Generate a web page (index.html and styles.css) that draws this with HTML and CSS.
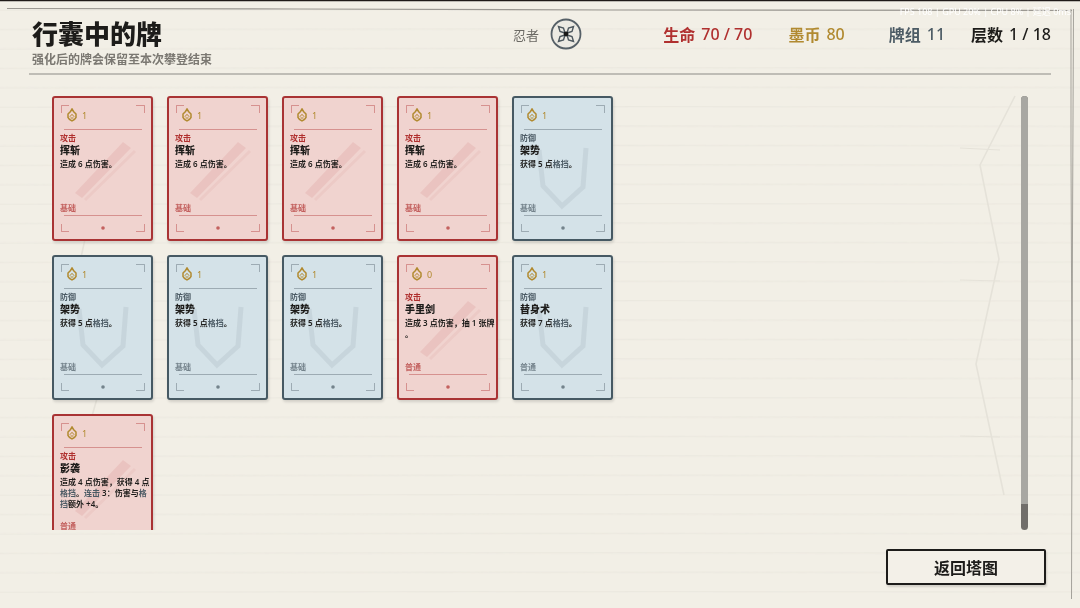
FILE: index.html
```
<!DOCTYPE html>
<html lang="zh-CN">
<head>
  <meta charset="UTF-8" />
  <meta name="viewport" content="width=device-width, initial-scale=1.0" />
  <title>行囊中的牌</title>
  <link rel="stylesheet" href="styles.css">
</head>
<body>
  <svg class="paper" viewBox="0 0 1080 608" preserveAspectRatio="none" aria-hidden="true">
    <defs>
      <pattern id="rules" x="0" y="9" width="1080" height="19.4" patternUnits="userSpaceOnUse">
        <path d="M0 1.2L540 .6L1080 1" fill="none" stroke="#ebe8df" stroke-width="1" />
      </pattern>
    </defs>
    <rect width="1080" height="608" fill="url(#rules)" />
    <g fill="none" stroke="#e5e2d9" stroke-width="1.6">
      <path d="M1015 96L980 165L999 259L976 364L1004 495" />
      <path d="M98 180L80 262M98 395L88 430" />
      <path d="M960 148L1000 150M960 280L1000 281M960 436L1000 437" stroke-width="1" />
    </g>
    <path d="M0 .5H1080" stroke="#1f1a18" stroke-width="1.4" />
    <g fill="none" stroke="#9b9892">
      <path d="M7 8.5L300 9L610 10L1072 10.5" stroke-width="1.2" />
      <path d="M1071 9V155L1072 380M1073.5 9L1072.5 230L1071.5 599" stroke-width=".9" />
    </g>
  </svg>

  <div class="perf">FPS 108 | GPU 20% | CPU 8% | 延迟 0ms</div>

  <header>
    <div class="heading">
      <h1>行囊中的牌</h1>
      <p>强化后的牌会保留至本次攀登结束</p>
    </div>
    <div class="hero">
      <span>忍者</span>
      <svg viewBox="0 0 32 32" width="32" height="32" aria-hidden="true">
        <circle cx="16" cy="16" r="14.5" fill="#eceae3" stroke="#566067" stroke-width="1.8" />
        <g fill="none" stroke="#4c575e" stroke-width="1.4">
          <path d="M15 15L10 13.500L8.500 8.500L13.500 10Z" />
          <path d="M17 15L22 13.500L23.500 8.500L18.500 10Z" />
          <path d="M17 17L22 18.500L23.500 23.500L18.500 22Z" />
          <path d="M15 17L10 18.500L8.500 23.500L13.500 22Z" />
        </g>
        <circle cx="16" cy="16" r="2.4" fill="#191919" />
      </svg>
    </div>
    <div class="stats">
      <div class="stat hp"><b>生命</b><span>70 / 70</span></div>
      <div class="stat gold"><b>墨币</b><span>80</span></div>
      <div class="stat deck"><b>牌组</b><span>11</span></div>
      <div class="stat floor"><b>层数</b><span>1 / 18</span></div>
    </div>
  </header>

  <main>
    <div class="cards" id="cards"></div>
    <div class="scrollbar"><div class="thumb"></div></div>
  </main>

  <footer>
    <button type="button">返回塔图</button>
  </footer>

  <script>
    const block = '<em>格挡</em>';
    const slash = { type: 'attack', cost: 1, name: '挥斩', text: '造成 6 点伤害。', rarity: '基础' };
    const guard = { type: 'defend', cost: 1, name: '架势', text: `获得 5 点${block}。`, rarity: '基础' };
    const deck = [
      slash, slash, slash, slash, guard,
      guard, guard, guard,
      { type: 'attack', cost: 0, name: '手里剑', text: '造成 3 点伤害，抽 1 张牌。', rarity: '普通' },
      { type: 'defend', cost: 1, name: '替身术', text: `获得 7 点${block}。`, rarity: '普通' },
      { type: 'attack', cost: 1, name: '影袭', text: `造成 4 点伤害，获得 4 点${block}。<em>连击</em> 3：伤害与${block}额外 +4。`, rarity: '普通' }
    ];
    const labels = { attack: '攻击', defend: '防御' };

    const art = {
      attack: '<path d="M23 97L71 46L79 52L30 102Z" fill="currentColor"/><path d="M33 104L83 55" stroke="currentColor" stroke-width="3" opacity=".6"/>',
      defend: '<path d="M27 54L31 90L50 110L71 91L74 52" fill="none" stroke="currentColor" stroke-width="5"/>'
    };

    function cardHtml(card) {
      return `<article class="card ${card.type}">
        <svg class="art" viewBox="0 0 101 145" aria-hidden="true">
          <g class="mark">${art[card.type]}</g>
          <path class="frame" d="M9.5 17V9.5H17M84 9.5H92.5V17M9.5 128V135.500H17M84 135.500H92.500V128M12 33.500H90M12 119.500H90" />
          <circle class="dot" cx="51" cy="132" r="1.8" />
        </svg>
        <div class="cost">
          <svg viewBox="0 0 12 14" width="12" height="14" aria-hidden="true">
            <path d="M6 1L7.500 3.500L10 6V9.500L8.500 11.500L6 13L3.500 11.500L2 9.500V6L4.500 3.500Z" />
            <path d="M3.800 8.800L6 6.300L8.200 8.800M4.500 10H7.500" stroke-width="1" />
          </svg>
          <span>${card.cost}</span>
        </div>
        <div class="type">${labels[card.type]}</div>
        <h2>${card.name}</h2>
        <p>${card.text}</p>
        <div class="rarity">${card.rarity}</div>
      </article>`;
    }

    document.getElementById('cards').innerHTML = deck.map(cardHtml).join('');
  </script>
</body>
</html>
```
FILE: styles.css
```
:root {
  --paper: #f2efe6;
  --ink: #1d1c1a;
  --red: #b0302f;
  --gold: #b18a30;
  --slate: #4c5b65;
}
* {
  box-sizing: border-box;
  margin: 0;
}
body {
  font-family: "Noto Sans", "Noto Sans CJK SC", sans-serif;
  background: var(--paper);
  color: var(--ink);
  height: 100vh;
  display: flex;
  flex-direction: column;
  overflow: hidden;
}
.paper {
  position: fixed;
  inset: 0;
  width: 100%;
  height: 100%;
  z-index: -1;
}
.perf {
  position: absolute;
  top: 6px;
  right: 9px;
  font-size: 9px;
  line-height: 12px;
  color: #fff;
}
header {
  display: grid;
  grid-template-columns: 1fr auto 1fr;
  margin: 0 29px;
  padding: 17px 0 0 3px;
  height: 75px;
  border-bottom: 2px solid #bfbdb6;
}
h1 {
  font-size: 26px;
  line-height: 34px;
  font-weight: 900;
}
.heading p {
  font-size: 12px;
  line-height: 18px;
  font-weight: 700;
  color: #7b7872;
}
.hero {
  display: flex;
  align-items: center;
  gap: 11px;
  height: 34px;
  padding-left: 12px;
  font: 13px "Noto Sans CJK SC", sans-serif;
  color: #6b6964;
}
.stats {
  display: flex;
  justify-content: flex-end;
  height: 34px;
  align-items: center;
  font-size: 16px;
  line-height: 20px;
  font-weight: 500;
  white-space: nowrap;
}
.stat {
  display: flex;
  align-items: center;
  gap: 6px;
}
.stat b {
  font-family: "Noto Sans CJK SC", sans-serif;
}
.hp { color: var(--red); margin-right: 36px; }
.gold { color: var(--gold); margin-right: 44px; }
.deck { color: var(--slate); margin-right: 26px; }
main {
  flex: 1;
  min-height: 0;
  display: flex;
  justify-content: space-between;
  margin: 21px 52px 0;
}
.cards {
  display: grid;
  grid-template-columns: repeat(5, 101px);
  grid-auto-rows: 145px;
  gap: 14px;
  padding-right: 8px;
  overflow: hidden;
}
.card {
  position: relative;
  border: 2px solid;
  border-radius: 3px;
  padding: 9px 0 0 6px;
  box-shadow: 1px 2px 3px #0002;
  display: flex;
  flex-direction: column;
}
.attack { background: #f0d3cf; border-color: #a93334; color: var(--red); }
.defend { background: #d4e2e8; border-color: #465963; color: var(--slate); }
.art {
  position: absolute;
  inset: -2px;
  width: 101px;
  height: 145px;
}
.mark { opacity: 0.09; }
.frame {
  fill: none;
  stroke: currentColor;
  opacity: 0.4;
}
.dot {
  fill: currentColor;
  opacity: 0.7;
}
.cost {
  display: flex;
  align-items: center;
  gap: 4px;
  height: 16px;
  margin: 0 0 10px 6px;
  font-size: 9px;
  color: var(--gold);
}
.cost svg {
  fill: none;
  stroke: var(--gold);
  stroke-width: 1.5;
}
.type, .rarity {
  font-size: 8px;
  line-height: 10px;
  font-weight: 700;
}
.rarity {
  margin: auto 0 26px;
  opacity: 0.7;
}
.card h2 {
  font-size: 10px;
  line-height: 14px;
  font-weight: 900;
  color: var(--ink);
}
.card p {
  position: relative;
  width: 92px;
  padding-top: 1px;
  font-size: 8px;
  line-height: 11px;
  font-weight: 600;
  line-break: anywhere;
  color: var(--ink);
}
.card em {
  font-style: normal;
  color: var(--slate);
}
.scrollbar {
  width: 7px;
  border-radius: 4px;
  background: #716e6a;
  overflow: hidden;
}
.thumb {
  height: 94%;
  background: #a8a7a2;
}
footer {
  display: flex;
  justify-content: flex-end;
  padding: 19px 34px 23px;
}
button {
  width: 160px;
  height: 36px;
  border: 2px solid var(--ink);
  border-radius: 2px;
  background: #f3f0e8;
  box-shadow: 1px 2px 2px #0002;
  font: 700 16px "Noto Sans", "Noto Sans CJK SC", sans-serif;
  color: var(--ink);
  cursor: pointer;
}
```
